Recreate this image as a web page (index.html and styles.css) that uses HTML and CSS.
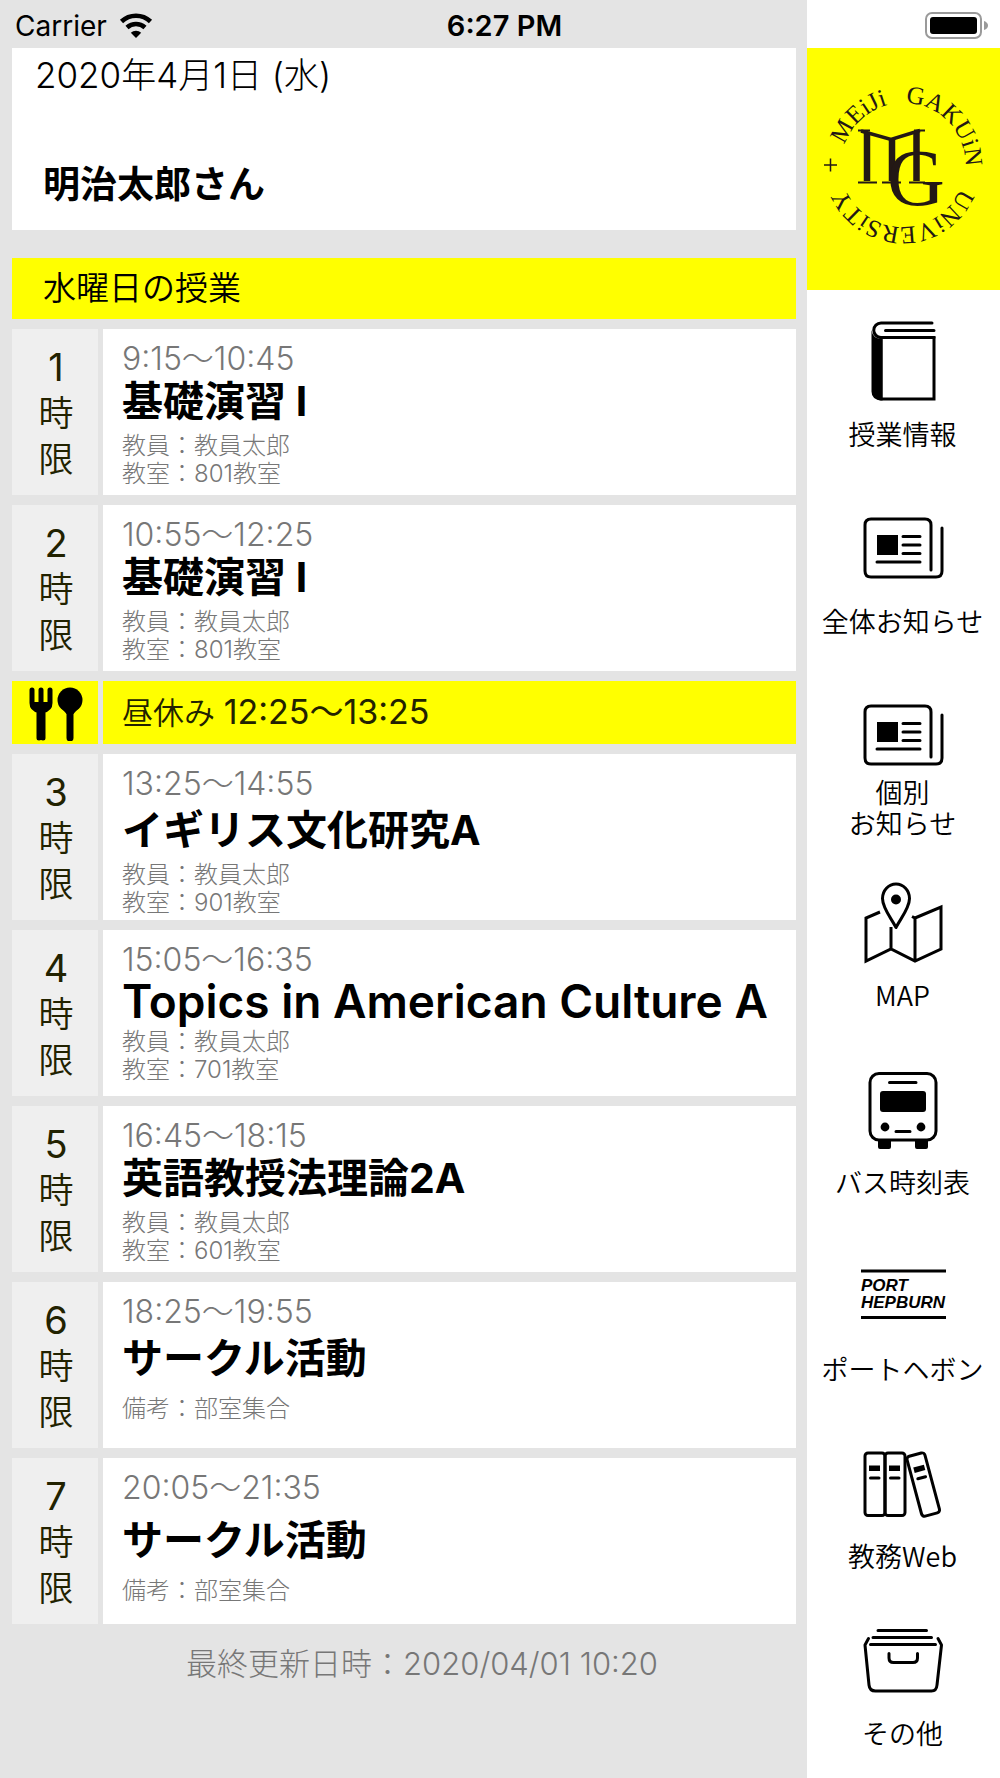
FILE: index.html
```html
<!DOCTYPE html>
<html lang="ja">
<head>
<meta charset="utf-8">
<meta name="viewport" content="width=device-width, initial-scale=1">
<title>水曜日の授業</title>
<link rel="stylesheet" href="styles.css">
</head>
<body>
<div class="app">
  <header class="status">
    <div class="status-left">
      <span>Carrier</span>
      <svg class="wifi" viewBox="0 0 34 26" aria-hidden="true">
        <path d="M2.500 8.500a21 21 0 0 1 29 0M8 14.500a13.500 13.500 0 0 1 18 0" fill="none" stroke="#000" stroke-width="4.600"/>
        <path d="M17 25l-5.200-5.200a7.500 7.500 0 0 1 10.400 0z"/>
      </svg>
    </div>
    <time class="status-time">6:27 PM</time>
    <div class="status-right">
      <svg class="battery" viewBox="0 0 63 28" aria-hidden="true">
        <rect x="1" y="1" width="55" height="25" rx="6" fill="none" stroke="#9a9a9a" stroke-width="2"/>
        <rect x="5" y="5" width="47" height="17" rx="3"/>
        <path d="M59 9q4 1.500 4 4.500t-4 4.500z" fill="#9a9a9a"/>
      </svg>
    </div>
  </header>

  <main class="main">
    <section class="profile">
      <p class="date">2020年4月1日 (水)</p>
      <h1 class="student">明治太郎さん</h1>
    </section>
    <section class="timetable">
      <h2 class="day">水曜日の授業</h2>
      <div class="row">
        <div class="period"><span class="num">1</span><span>時</span><span>限</span></div>
        <article class="lecture">
          <p class="time">9:15〜10:45</p>
          <h3 class="title">基礎演習 I</h3>
          <p class="detail">教員：教員太郎</p><p class="detail">教室：801教室</p>
        </article>
      </div>
      <div class="row">
        <div class="period"><span class="num">2</span><span>時</span><span>限</span></div>
        <article class="lecture">
          <p class="time">10:55〜12:25</p>
          <h3 class="title">基礎演習 I</h3>
          <p class="detail">教員：教員太郎</p><p class="detail">教室：801教室</p>
        </article>
      </div>
      <div class="row row-lunch">
        <div class="lunch-icon">
          <svg viewBox="0 0 54 54" aria-hidden="true">
            <path d="M3 3v13q0 6 7 7.500V51M21 3v13q0 6-7 7.500V51M12 3v20" fill="none" stroke="#000" stroke-width="5" stroke-linecap="round"/>
            <path d="M3 15h18l-6 9H9zM9 22h6v30H9z"/>
            <circle cx="41" cy="13" r="12.500"/>
            <path d="M30 18h22l-7.500 9h-7z"/>
            <path d="M41 22v29" stroke="#000" stroke-width="7" stroke-linecap="round"/>
          </svg>
        </div>
        <p class="lunch">昼休み <span>12:25〜13:25</span></p>
      </div>
      <div class="row">
        <div class="period"><span class="num">3</span><span>時</span><span>限</span></div>
        <article class="lecture lecture-loose">
          <p class="time">13:25〜14:55</p>
          <h3 class="title">イギリス文化研究A</h3>
          <p class="detail">教員：教員太郎</p><p class="detail">教室：901教室</p>
        </article>
      </div>
      <div class="row">
        <div class="period"><span class="num">4</span><span>時</span><span>限</span></div>
        <article class="lecture">
          <p class="time">15:05〜16:35</p>
          <h3 class="title title-latin">Topics in American Culture A</h3>
          <p class="detail">教員：教員太郎</p><p class="detail">教室：701教室</p>
        </article>
      </div>
      <div class="row">
        <div class="period"><span class="num">5</span><span>時</span><span>限</span></div>
        <article class="lecture">
          <p class="time">16:45〜18:15</p>
          <h3 class="title">英語教授法理論2A</h3>
          <p class="detail">教員：教員太郎</p><p class="detail">教室：601教室</p>
        </article>
      </div>
      <div class="row">
        <div class="period"><span class="num">6</span><span>時</span><span>限</span></div>
        <article class="lecture lecture-loose lecture-memo">
          <p class="time">18:25〜19:55</p>
          <h3 class="title">サークル活動</h3>
          <p class="detail">備考：部室集合</p>
        </article>
      </div>
      <div class="row">
        <div class="period"><span class="num">7</span><span>時</span><span>限</span></div>
        <article class="lecture lecture-last lecture-memo">
          <p class="time">20:05〜21:35</p>
          <h3 class="title">サークル活動</h3>
          <p class="detail">備考：部室集合</p>
        </article>
      </div>
    </section>
    <p class="updated">最終更新日時：2020/04/01 10:20</p>
  </main>

  <aside class="side">
    <div class="brand">
      <svg viewBox="0 0 193 242" role="img" aria-label="Meiji Gakuin University">
        <defs><path id="ring" d="M96 179a62 62 0 1 1 1 0"/></defs>
        <g class="ring-text">
          <text><textPath href="#ring" startOffset="38%">MEiJi</textPath></text>
          <text><textPath href="#ring" startOffset="63%">GAKUiN</textPath></text>
        </g>
        <g class="ring-text" transform="rotate(180 96 117)">
          <text><textPath href="#ring" startOffset="50%">UNiVERSiTY</textPath></text>
        </g>
        <g fill="none" stroke="#231815">
          <path d="M17 117h13M23.500 110.500v13" stroke-width="1.500"/>
          <path d="M60 84v49M85 91v42M109.500 84v49" stroke-width="6.500"/>
          <path d="M54 83l30 8.500 29-9" stroke-width="3.500"/>
          <path d="M51 82.500h12M51 134.500h19M75 134.500h19M102 134.500h16M107 82.500h11" stroke-width="1.800"/>
        </g>
        <text class="monogram" x="80" y="157">G</text>
      </svg>
    </div>
    <nav class="menu" aria-label="メニュー">
      <a class="item" href="#class">
        <svg viewBox="0 0 90 80" aria-hidden="true">
          <path d="M76 17.500H23a7.200 7.200 0 0 1 0-14.500h51M27.500 10.500H76" class="line"/>
          <path d="M23 17.500h53V79H23z" class="line square"/>
          <path d="M13.500 10q1 9 11 9v61.500q-11 0-11-9z"/>
        </svg>
        <span class="label">授業情報</span>
      </a>
      <a class="item" href="#news">
        <svg viewBox="0 0 90 80" aria-hidden="true">
          <path d="M73 63V18q0-6-6-6H13q-6 0-6 6v46q0 6 6 6h65q6 0 6-6V21" class="line"/>
          <path d="M45 29.500h17M45 38h17M45 46.500h17M19 55h43" class="line"/>
          <path d="M19 28h21v20H19z"/>
        </svg>
        <span class="label">全体お知らせ</span>
      </a>
      <a class="item" href="#personal">
        <svg viewBox="0 0 90 80" aria-hidden="true">
          <path d="M73 63V18q0-6-6-6H13q-6 0-6 6v46q0 6 6 6h65q6 0 6-6V21" class="line"/>
          <path d="M45 29.500h17M45 38h17M45 46.500h17M19 55h43" class="line"/>
          <path d="M19 28h21v20H19z"/>
        </svg>
        <span class="label">個別<br>お知らせ</span>
      </a>
      <a class="item" href="#map">
        <svg viewBox="0 0 90 80" aria-hidden="true">
          <path d="M22 31L8 37v43l25-12 24 12 26-12V26L57 37l-3-1.500M57 37v43M33 68V46" class="line square"/>
          <path d="M38 46.500C33 37 24.500 27 24.500 17.500a13.500 14.500 0 0 1 27 0C51.500 27 43 37 38 46.500z" class="line"/>
          <circle cx="38" cy="18.500" r="5"/>
        </svg>
        <span class="label">MAP</span>
      </a>
      <a class="item" href="#bus">
        <svg viewBox="0 0 90 80" aria-hidden="true">
          <rect x="12" y="5.500" width="66" height="66.500" rx="9" class="line"/>
          <path d="M31.500 14.500H58M38 63.500h14" class="line"/>
          <rect x="22" y="23" width="46" height="21" rx="3"/>
          <circle cx="27" cy="59" r="4.400"/><circle cx="63" cy="59" r="4.400"/>
          <path d="M20 72h13v7q0 2-2 2h-9q-2 0-2-2zM57 72h13v7q0 2-2 2h-9q-2 0-2-2z"/>
        </svg>
        <span class="label">バス時刻表</span>
      </a>
      <a class="item" href="#port">
        <svg viewBox="0 0 90 80" aria-hidden="true">
          <path d="M3 16h85M3 62.500h85" class="line square"/>
          <text class="port" x="3" y="36">PORT</text>
          <text class="port" x="3" y="53">HEPBURN</text>
        </svg>
        <span class="label">ポートヘボン</span>
      </a>
      <a class="item" href="#web">
        <svg viewBox="0 0 90 80" aria-hidden="true">
          <rect x="7" y="11" width="20" height="62.500" rx="3" class="line"/>
          <rect x="27" y="11" width="20" height="62.500" rx="3" class="line"/>
          <path d="M12.500 36H21M32.500 36H41" class="line"/>
          <path d="M11 23.500h11V29H11zM31 23.500h11V29H31z"/>
          <g transform="rotate(-15 65.500 42.500)">
            <rect x="56" y="11.500" width="18.500" height="62" rx="3" class="line"/>
            <path d="M61.500 35.500h8" class="line"/>
            <path d="M60 23.500h11V29H60z"/>
          </g>
        </svg>
        <span class="label">教務Web</span>
      </a>
      <a class="item" href="#other">
        <svg viewBox="0 0 90 80" aria-hidden="true">
          <path d="M20 11.500h48.500M15 18.500h58.500M12.500 25.500h65" class="line"/>
          <path d="M10.500 19.500L7 26l4 40q.600 6 6.500 6h56q5 0 5.500-6l4.500-40-3.500-6.500" class="line"/>
          <path d="M31 34.500V39q0 4.500 4.500 4.500H55q4.500 0 4.500-4.500v-4.500" class="line"/>
        </svg>
        <span class="label">その他</span>
      </a>
    </nav>
  </aside>
</div>
</body>
</html>
```

FILE: styles.css
```css
* { box-sizing: border-box; }

body {
  margin: 0;
  background: #e4e4e4;
  color: #000;
  font-family: Inter, "Noto Sans CJK JP", sans-serif;
}

h1, h2, h3, p { margin: 0; }

.app {
  display: grid;
  grid-template-columns: minmax(0, 1fr) 193px;
  grid-template-rows: 48px auto;
  min-height: 100vh;
}

/* The status bar lies across both columns */
.status {
  grid-area: 1 / 1 / 2 / 3;
  z-index: 1;
  display: grid;
  grid-template-columns: 1fr auto 1fr;
  align-items: center;
  padding: 3px 12px 0 15px;
  font-size: 28px;
  line-height: 40px;
}

.status-left { display: flex; align-items: center; gap: 12px; }
.status-time { padding-left: 6px; font-size: 29px; font-weight: 600; }
.status-right { display: flex; justify-content: flex-end; }
.wifi { width: 34px; height: 26px; }
.battery { width: 63px; height: 28px; }

.main {
  grid-area: 1 / 1 / 3 / 2;
  padding: 48px 11px 0 12px;
}

.profile {
  min-height: 182px;
  padding: 7px 23px 0;
  background: #fff;
}

.date {
  font-size: 35px;
  line-height: 40px;
  font-weight: 300;
}

.student {
  margin-top: 68px;
  padding-left: 8px;
  font-size: 37px;
  line-height: 44px;
  font-weight: 700;
}

.timetable {
  display: flex;
  flex-direction: column;
  gap: 10px;
  margin-top: 28px;
}

.day {
  padding-left: 31px;
  background: #ff0;
  font-size: 33px;
  line-height: 61px;
  font-weight: 350;
}

.row {
  display: grid;
  grid-template-columns: 86px minmax(0, 1fr);
  gap: 5px;
  min-height: 166px;
}

.period {
  display: flex;
  flex-direction: column;
  align-items: center;
  padding: 15px 0 0 2px;
  background: #efefef;
  color: #220;
  font-size: 35px;
  line-height: 46px;
  font-weight: 350;
}

.num { font-size: 38px; font-weight: 400; }

.lecture {
  padding: 11px 16px 0 19px;
  background: #fff;
}

.time {
  color: #777;
  font-size: 32px;
  line-height: 38px;
  font-weight: 300;
}

.title {
  margin-bottom: 7px;
  font-size: 41px;
  line-height: 47px;
  font-weight: 700;
  white-space: nowrap;
}

.title-latin {
  margin-bottom: 5px;
  font-size: 46px;
  line-height: 44px;
  font-weight: 600;
}

.detail {
  color: #777;
  font-size: 24px;
  line-height: 28px;
  font-weight: 300;
}

.lecture-loose .title { margin-top: 4px; }
.lecture-last .title { margin-top: 10px; }
.lecture-memo .title { margin-bottom: 13px; }

.row-lunch { min-height: 63px; }
.row-lunch > * { background: #ff0; }
.lunch-icon { display: flex; align-items: center; justify-content: center; padding: 2px 0 0 2px; }
.lunch-icon svg { width: 54px; height: 54px; }

.lunch {
  padding-left: 19px;
  color: #220;
  font-size: 31px;
  line-height: 62px;
  font-weight: 350;
}

.lunch span { font-size: 34px; font-weight: 400; }

.updated {
  margin-top: 20px;
  padding-left: 36px;
  color: #777;
  font-size: 31px;
  line-height: 40px;
  font-weight: 300;
  text-align: center;
}

.side {
  grid-area: 1 / 2 / 3 / 3;
  padding-top: 48px;
  background: #fff;
}

.brand { background: #ff0; }
.brand svg { display: block; width: 100%; }

.ring-text {
  fill: #231815;
  font-family: "Liberation Serif", serif;
  font-size: 25px;
  text-anchor: middle;
}

.monogram {
  fill: #231815;
  font-family: "Liberation Serif", serif;
  font-size: 80px;
}

.item {
  display: flex;
  flex-direction: column;
  align-items: center;
  gap: 2px;
  padding: 30px 2px 13px 0;
  color: #000;
  text-decoration: none;
}

.item:last-child { padding: 20px 2px 0 0; }
.item svg { width: 90px; height: 80px; overflow: visible; }

.label {
  display: flex;
  align-items: center;
  height: 62px;
  font-family: "Noto Sans CJK JP", sans-serif;
  font-size: 27px;
  font-weight: 350;
  line-height: 31px;
  text-align: center;
  white-space: nowrap;
}

.line {
  fill: none;
  stroke: #000;
  stroke-width: 3;
  stroke-linecap: round;
  stroke-linejoin: round;
}

.square { stroke-linecap: butt; stroke-linejoin: miter; }

.port {
  font: italic 700 17px "Liberation Sans", sans-serif;
}
```
